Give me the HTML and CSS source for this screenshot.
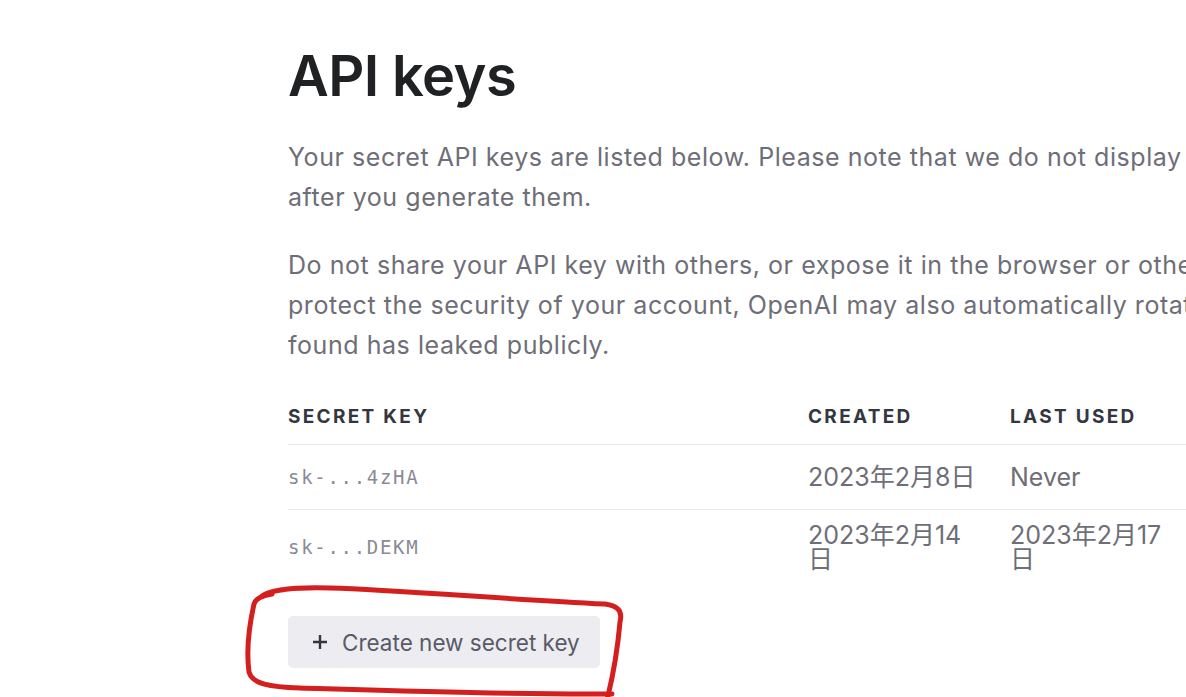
FILE: index.html
```html
<!DOCTYPE html>
<html>
<head>
<meta charset="utf-8">
<link rel="stylesheet" href="styles.css">
</head>
<body>
<main class="page">
  <h1 class="title">API keys</h1>
  <p class="desc">Your secret API keys are listed below. Please note that we do not display your secret API keys again after you generate them.</p>
  <p class="desc">Do not share your API key with others, or expose it in the browser or other client-side code. In order to protect the security of your account, OpenAI may also automatically rotate any API key that we've found has leaked publicly.</p>
  <table class="keys">
    <thead>
      <tr><th class="c-key">SECRET KEY</th><th class="c-created">CREATED</th><th class="c-used">LAST USED</th><th></th></tr>
    </thead>
    <tbody>
      <tr><td class="mono">sk-...4zHA</td><td>2023年2月8日</td><td>Never</td><td></td></tr>
      <tr class="last"><td class="mono">sk-...DEKM</td><td>2023年2月14日</td><td>2023年2月17日</td><td></td></tr>
    </tbody>
  </table>
  <button class="btn"><svg class="plus" viewBox="0 0 16 16" width="16" height="16"><path d="M8 1v14M1 8h14" stroke="#353740" stroke-width="2.4" fill="none"/></svg><span>Create new secret key</span></button>
</main>
<svg class="scribble" viewBox="0 0 1186 697" width="1186" height="697"><path d="M262 596 C 270 590, 295 587, 330 588 C 400 590, 500 599, 605 604 C 617 606, 623 610, 620 622 C 618 645, 614 672, 607 700 M 612 694 C 520 695, 400 691, 300 688 C 270 687, 252 684, 249 672 C 246 650, 250 622, 254 604 C 256 598, 262 596, 272 594" stroke="#d41f1f" stroke-width="5" fill="none" stroke-linecap="round" stroke-linejoin="round"/></svg>
</body>
</html>
```
FILE: styles.css
```css
html, body {
  margin: 0;
  padding: 0;
  background: #ffffff;
  overflow: hidden;
}
body {
  position: relative;
  width: 1186px;
  height: 697px;
  font-family: Inter, "Noto Sans CJK JP", sans-serif;
  color: #6e6e78;
}
.page {
  width: 1400px;
  padding: 46px 0 0 288px;
}
.title {
  margin: 0 0 31px;
  font-size: 56px;
  font-weight: 600;
  color: #202123;
  line-height: 60px;
  letter-spacing: -0.6px;
}
.desc {
  width: 1272px;
  margin: 0 0 28px;
  font-size: 25px;
  line-height: 40px;
  letter-spacing: 0.55px;
  color: #6e6e78;
}
.keys {
  width: 1100px;
  border-collapse: collapse;
  margin-top: 40px;
}
.keys th {
  text-align: left;
  font-size: 19px;
  line-height: 24px;
  font-weight: 700;
  letter-spacing: 2.3px;
  color: #353740;
  padding: 0 0 15px;
  border-bottom: 1px solid #e8e8ec;
}
.c-key { width: 520px; }
.c-created { width: 202px; }
.c-used { width: 202px; }
.keys td {
  padding: 20px 30px 20px 0;
  font-size: 25px;
  line-height: 24px;
  color: #6e6e78;
  border-bottom: 1px solid #e8e8ec;
  vertical-align: middle;
}
.keys tr.last td {
  padding-top: 13px;
  border-bottom: none;
}
.keys td.mono {
  font-family: "DejaVu Sans Mono", monospace;
  font-size: 19px;
  letter-spacing: 1.7px;
  color: #8a8a94;
}
.btn {
  display: flex;
  align-items: center;
  gap: 14px;
  width: 312px;
  height: 52px;
  margin-top: 25px;
  padding: 0 0 0 24px;
  border: none;
  border-radius: 5px;
  background: #ececf1;
  font-family: Inter, sans-serif;
  font-size: 22.5px;
  color: #595a66;
}
.plus { flex: none; }
.scribble {
  position: absolute;
  left: 0;
  top: 0;
  pointer-events: none;
}
```
